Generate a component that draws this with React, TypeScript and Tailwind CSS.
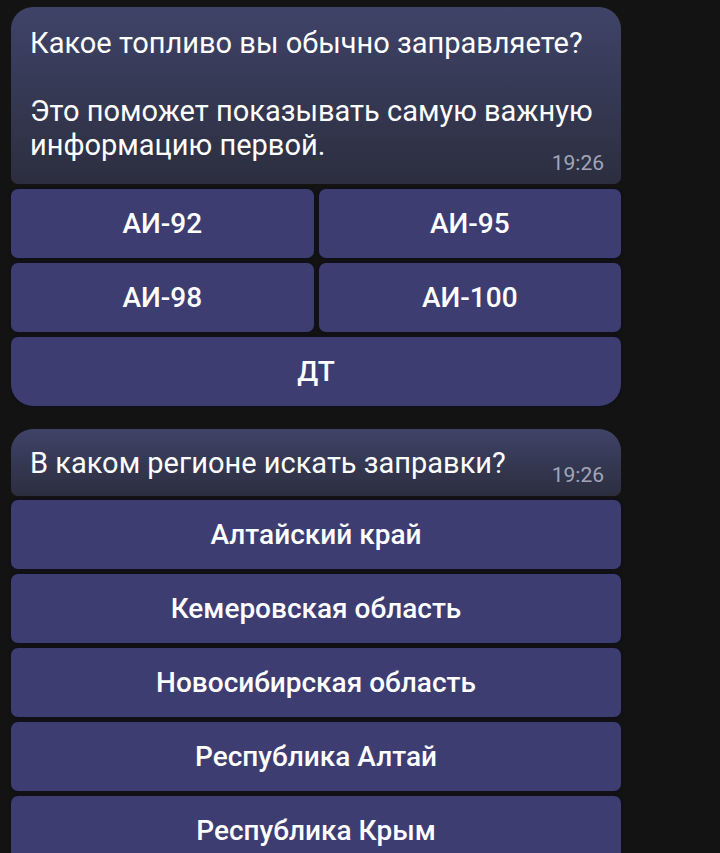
const fuels = [["АИ-92", "АИ-95"], ["АИ-98", "АИ-100"]];
const regions = ["Алтайский край", "Кемеровская область", "Новосибирская область", "Республика Алтай", "Республика Крым"];

function Btn({ label, className = "" }: { label: string; className?: string }) {
  return (
    <button className={"flex h-[69px] items-center justify-center bg-[#3d3d72] text-[28px] font-medium text-white shadow-[0_0_3px_rgba(10,10,40,0.9)] " + className}>
      {label}
    </button>
  );
}

function Bubble({ children, time, pt, mt }: { children: React.ReactNode; time: string; pt: string; mt: string }) {
  return (
    <div className={"rounded-t-[22px] rounded-b-[7px] bg-gradient-to-b from-[#3f4368] to-[#2c2e3f] pr-[17px] pl-[19px] pb-[9px] text-white " + pt}>
      <div className="text-[29px] leading-[34px]">{children}</div>
      <div className={"flex justify-end " + mt}>
        <span className="text-[21px] leading-[24px] text-[#a3a6bb]">{time}</span>
      </div>
    </div>
  );
}

export default function App() {
  return (
    <div className="h-[853px] overflow-hidden bg-[#131313] pt-[7px] pl-[11px]" style={{ fontFamily: "Roboto, 'Noto Sans', sans-serif" }}>
      <div className="flex w-[610px] flex-col">
        <Bubble time="19:26" pt="pt-[19px]" mt="-mt-[11px]">
          <p>Какое топливо вы обычно заправляете?</p>
          <p>&nbsp;</p>
          <p>Это поможет показывать самую важную информацию первой.</p>
        </Bubble>
        <div className="mt-[5px] flex flex-col gap-[5px]">
          {fuels.map((row) => (
            <div key={row[0]} className="grid grid-cols-2 gap-[5px]">
              {row.map((f) => (
                <Btn key={f} label={f} className="rounded-[7px]" />
              ))}
            </div>
          ))}
          <Btn label="ДТ" className="rounded-t-[7px] rounded-b-[22px]" />
        </div>

        <div className="mt-[23px]">
          <Bubble time="19:26" pt="pt-[17px]" mt="-mt-[17px]">
            <p>В каком регионе искать заправки?</p>
          </Bubble>
        </div>
        <div className="mt-[4px] flex flex-col gap-[5px]">
          {regions.map((r) => (
            <Btn key={r} label={r} className="rounded-[7px]" />
          ))}
        </div>
      </div>
    </div>
  );
}
